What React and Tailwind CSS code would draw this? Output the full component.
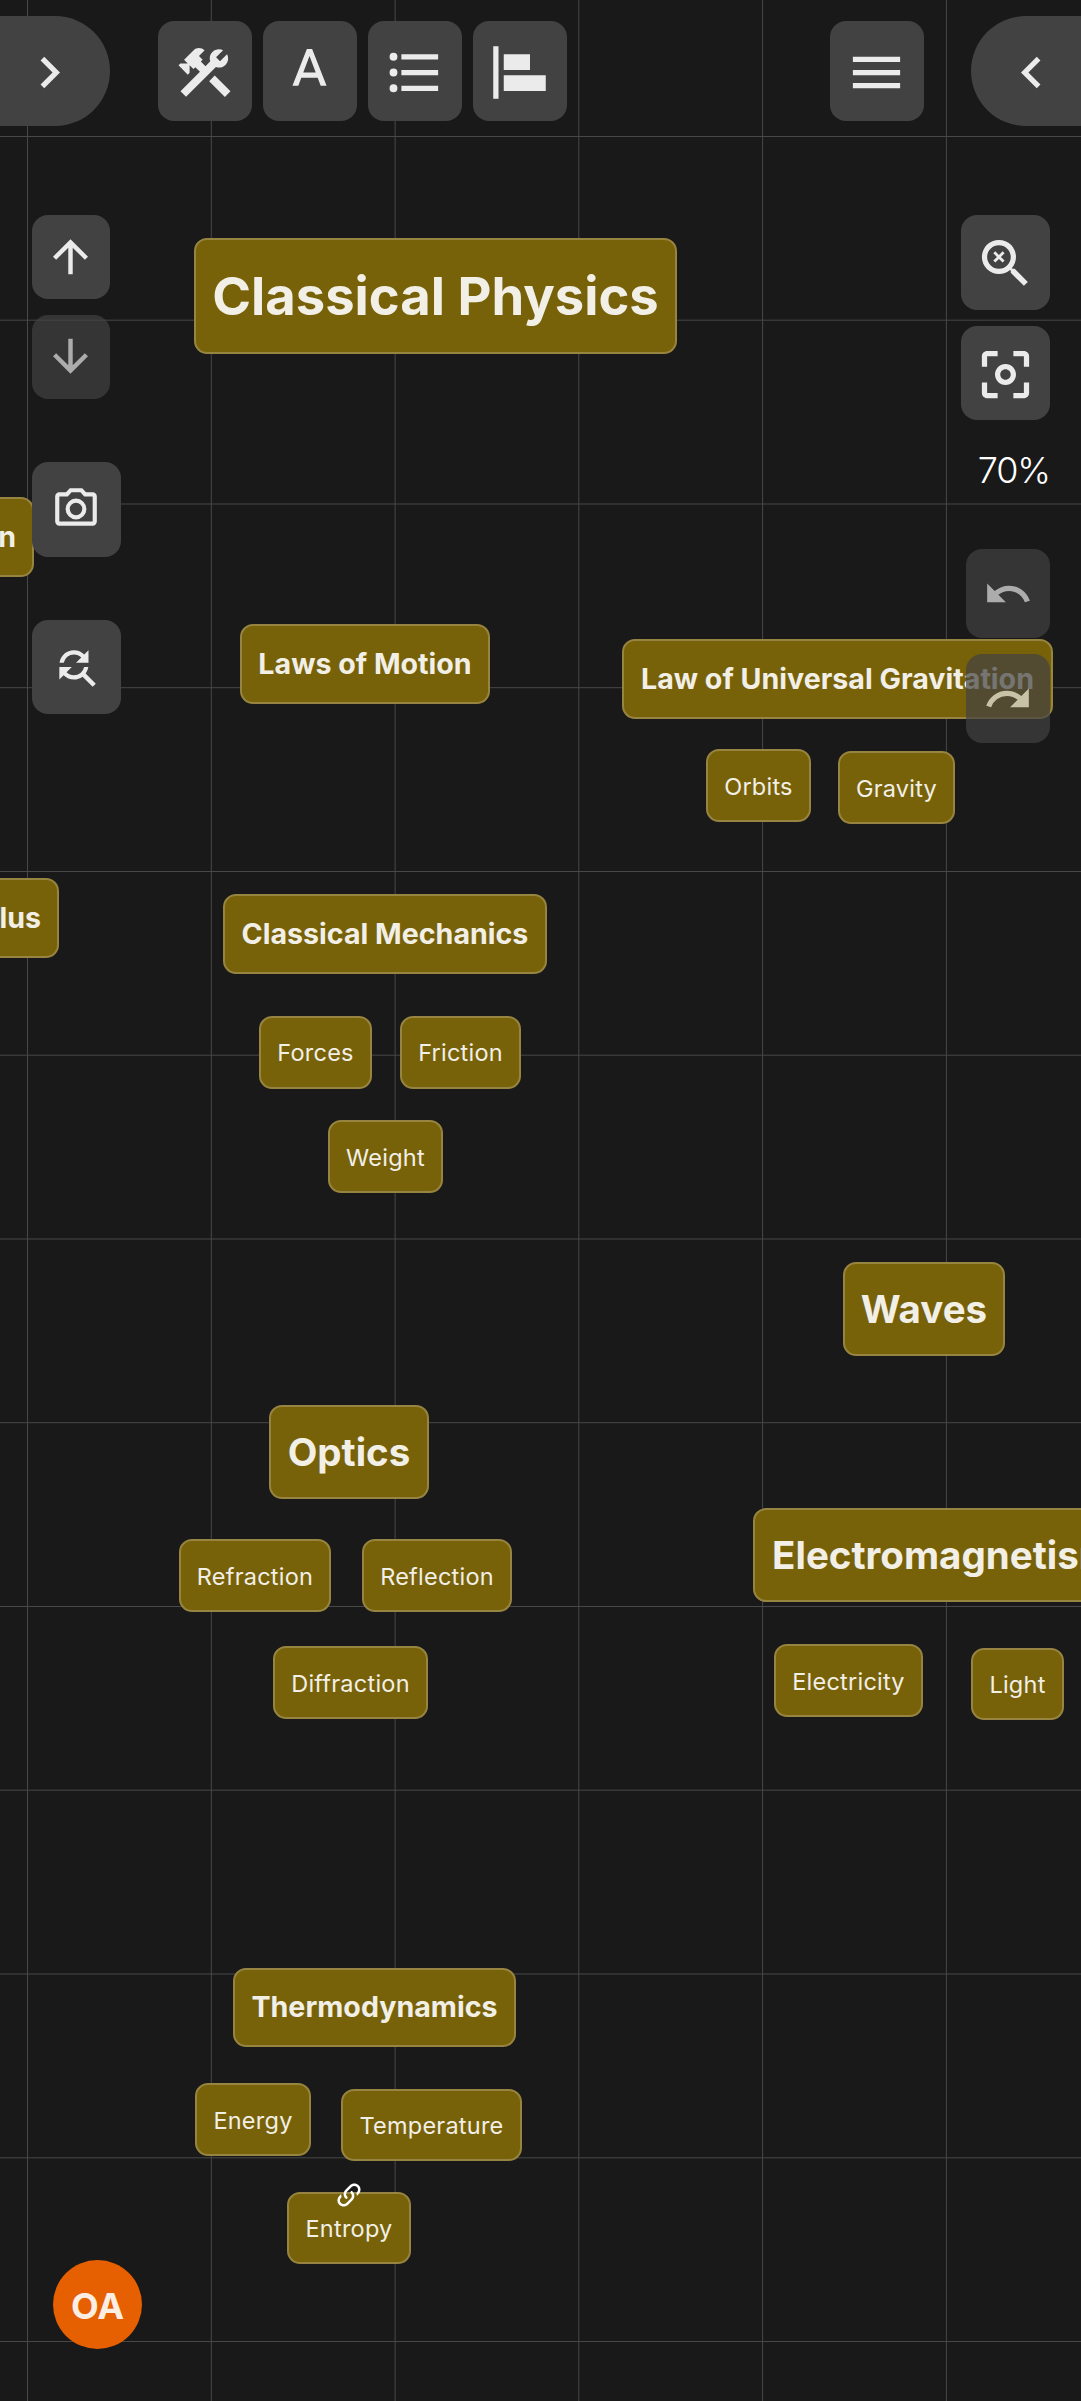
import { MdUndo, MdRedo, MdFindReplace, MdCenterFocusWeak } from "react-icons/md";

const GRID_X = [27.5, 211.3, 395.1, 578.8, 762.6, 946.4];
const GRID_Y = [136.5, 320.2, 504, 687.7, 871.5, 1055.2, 1239, 1422.7, 1606.5, 1790.2, 1974, 2157.8, 2341.5];

const SIZES = {
  title: "text-[52.5px] font-bold",
  heading: "text-[38.5px] font-bold",
  sub: "text-[28.6px] font-bold",
  small: "text-[23.5px] font-[380] tracking-[0.01em] pt-[2px]",
};

const NODES = [
  { t: "Classical Physics", s: "title", x: 194, y: 238, w: 483, h: 116 },
  { t: "Equation", s: "sub", x: -130, y: 497, w: 164, h: 80, end: true },
  { t: "Laws of Motion", s: "sub", x: 240, y: 624, w: 250, h: 80 },
  { t: "Law of Universal Gravitation", s: "sub", x: 622, y: 639, w: 431, h: 80 },
  { t: "Orbits", s: "small", x: 706, y: 749, w: 105, h: 73 },
  { t: "Gravity", s: "small", x: 838, y: 751, w: 117, h: 73 },
  { t: "Calculus", s: "sub", x: -105, y: 878, w: 164, h: 80, end: true },
  { t: "Classical Mechanics", s: "sub", x: 223, y: 894, w: 324, h: 80 },
  { t: "Forces", s: "small", x: 259, y: 1015.5, w: 113, h: 73 },
  { t: "Friction", s: "small", x: 400, y: 1015.5, w: 121, h: 73 },
  { t: "Weight", s: "small", x: 328, y: 1120, w: 115, h: 73 },
  { t: "Waves", s: "heading", x: 843, y: 1262, w: 162, h: 94 },
  { t: "Optics", s: "heading", x: 269, y: 1405, w: 160, h: 94 },
  { t: "Electromagnetism", s: "heading", x: 753, y: 1508, w: 380, h: 94 },
  { t: "Refraction", s: "small", x: 179, y: 1539, w: 152, h: 73 },
  { t: "Reflection", s: "small", x: 362, y: 1539, w: 150, h: 73 },
  { t: "Diffraction", s: "small", x: 273, y: 1646, w: 155, h: 73 },
  { t: "Electricity", s: "small", x: 774, y: 1644, w: 149, h: 73 },
  { t: "Light", s: "small", x: 971, y: 1648, w: 93, h: 72 },
  { t: "Thermodynamics", s: "sub", x: 233, y: 1968, w: 283, h: 79 },
  { t: "Energy", s: "small", x: 195, y: 2083, w: 116, h: 73 },
  { t: "Temperature", s: "small", x: 341, y: 2089, w: 181, h: 72 },
  { t: "Entropy", s: "small", x: 287, y: 2192, w: 124, h: 72, link: true },
];

const PATHS = {
  right: "M8.59 16.58L13.17 12L8.59 7.41L10 6L16 12L10 18L8.59 16.58Z",
  left: "M15.41 16.58L10.83 12L15.41 7.41L14 6L8 12L14 18L15.41 16.58Z",
  tools:
    "M13.78 15.3L19.78 21.3L21.89 19.14L15.89 13.14L13.78 15.3M17.5 10.1C17.11 10.1 16.69 10.05 16.36 9.91L4.97 21.25L2.86 19.14L10.27 11.74L8.5 9.96L7.78 10.66L6.33 9.25V12.11L5.63 12.81L2.11 9.25L2.81 8.55H5.62L4.22 7.14L7.78 3.58C8.95 2.41 10.83 2.41 12 3.58L9.89 5.74L11.3 7.14L10.59 7.85L12.38 9.63L14.2 7.75C14.06 7.42 14 7 14 6.63C14 4.66 15.56 3.11 17.5 3.11C18.09 3.11 18.61 3.25 19.08 3.53L16.41 6.2L17.91 7.7L20.58 5.03C20.86 5.5 21 6 21 6.63C21 8.55 19.45 10.1 17.5 10.1Z",
  textStyle: "M9.62 12L12 5.67L14.37 12M11 3L5.5 17H7.75L8.87 14H15.12L16.25 17H18.5L13 3H11Z",
  list: "M7 5H21V7H7V5M7 13V11H21V13H7M4 4.5A1.5 1.5 0 0 1 5.5 6A1.5 1.5 0 0 1 4 7.5A1.5 1.5 0 0 1 2.5 6A1.5 1.5 0 0 1 4 4.5M4 10.5A1.5 1.5 0 0 1 5.5 12A1.5 1.5 0 0 1 4 13.5A1.5 1.5 0 0 1 2.5 12A1.5 1.5 0 0 1 4 10.5M7 19V17H21V19H7M4 16.5A1.5 1.5 0 0 1 5.5 18A1.5 1.5 0 0 1 4 19.5A1.5 1.5 0 0 1 2.5 18A1.5 1.5 0 0 1 4 16.5Z",
  align: "M2 2H4V22H2ZM6 5H16V11H6ZM6 13H22V19H6Z",
  menu: "M3 6H21V8H3V6M3 11H21V13H3V11M3 16H21V18H3V16Z",
  up: "M13 20H11V8L5.5 13.5L4.08 12.08L12 4.16L19.92 12.08L18.5 13.5L13 8V20Z",
  down: "M11 4H13V16L18.5 10.5L19.92 11.92L12 19.84L4.08 11.92L5.5 10.5L11 16V4Z",
  camera:
    "M20 4H16.83L15 2H9L7.17 4H4A2 2 0 0 0 2 6V18A2 2 0 0 0 4 20H20A2 2 0 0 0 22 18V6A2 2 0 0 0 20 4M20 18H4V6H8.05L9.88 4H14.12L15.95 6H20V18M12 7A5 5 0 0 0 7 12A5 5 0 0 0 12 17A5 5 0 0 0 17 12A5 5 0 0 0 12 7M12 15A3 3 0 0 1 9 12A3 3 0 0 1 12 9A3 3 0 0 1 15 12A3 3 0 0 1 12 15Z",
  zoomReset:
    "M15.5 14L20.5 19L19 20.5L14 15.5V14.71L13.73 14.43C12.59 15.41 11.11 16 9.5 16A6.5 6.5 0 0 1 3 9.5A6.5 6.5 0 0 1 9.5 3A6.5 6.5 0 0 1 16 9.5C16 11.11 15.41 12.59 14.43 13.73L14.71 14H15.5M9.5 14C12 14 14 12 14 9.5C14 7 12 5 9.5 5C7 5 5 7 5 9.5C5 12 7 14 9.5 14M8.1 7.35L9.5 8.75L10.9 7.35L11.65 8.1L10.25 9.5L11.65 10.9L10.9 11.65L9.5 10.25L8.1 11.65L7.35 10.9L8.75 9.5L7.35 8.1Z",
  link: "M10.59 13.41C11 13.8 11 14.44 10.59 14.83C10.2 15.22 9.56 15.22 9.17 14.83C7.22 12.88 7.22 9.71 9.17 7.76V7.76L12.71 4.22C14.66 2.27 17.83 2.27 19.78 4.22C21.73 6.17 21.73 9.34 19.78 11.29L18.29 12.78C18.3 11.96 18.17 11.14 17.89 10.36L18.36 9.88C19.54 8.71 19.54 6.81 18.36 5.64C17.19 4.46 15.29 4.46 14.12 5.64L10.59 9.17C9.41 10.34 9.41 12.24 10.59 13.41M13.41 9.17C13.8 8.78 14.44 8.78 14.83 9.17C16.78 11.12 16.78 14.29 14.83 16.24V16.24L11.29 19.78C9.34 21.73 6.17 21.73 4.22 19.78C2.27 17.83 2.27 14.66 4.22 12.71L5.71 11.22C5.7 12.04 5.83 12.86 6.11 13.65L5.64 14.12C4.46 15.29 4.46 17.19 5.64 18.36C6.81 19.54 8.71 19.54 9.88 18.36L13.41 14.83C14.59 13.66 14.59 11.76 13.41 10.59C13 10.2 13 9.56 13.41 9.17Z",
};

function Icon({ name, className = "size-[63px]" }) {
  return (
    <svg viewBox="0 0 24 24" fill="currentColor" className={`shrink-0 ${className}`}>
      <path d={PATHS[name]} />
    </svg>
  );
}

function Btn({ className, children }) {
  return (
    <button className={`flex shrink-0 items-center justify-center bg-[#424242] text-[#ebebeb] ${className}`}>
      {children}
    </button>
  );
}

function Node({ node }) {
  return (
    <div
      className={`absolute flex items-center rounded-[13px] border-2 border-[#978440] bg-[#786209] leading-none whitespace-nowrap text-[#f2efe6] ${node.end ? "justify-end pr-4" : "justify-center"} ${SIZES[node.s]}`}
      style={{ left: node.x, top: node.y, width: node.w, height: node.h }}
    >
      {node.t}
      {node.link && <Icon name="link" className="absolute -top-[14px] left-[45px] size-[30px] text-white" />}
    </div>
  );
}

export default function App() {
  return (
    <div className="relative h-[2401px] w-[1081px] overflow-hidden bg-[#191919] font-['Inter',sans-serif]">
      <svg className="absolute inset-0 size-full" stroke="#484848" strokeWidth="1">
        {GRID_X.map((x) => <line key={x} x1={x} x2={x} y1="0" y2="2401" />)}
        {GRID_Y.map((y) => <line key={y} y1={y} y2={y} x1="0" x2="1081" />)}
      </svg>

      <div className="absolute inset-0">
        {NODES.map((n) => <Node key={n.t} node={n} />)}
      </div>

      <div className="relative flex h-full flex-col">
        <header className="flex items-center pt-4">
          <Btn className="h-[110px] w-[110px] rounded-r-full pr-[11px] pt-[2px]"><Icon name="right" /></Btn>
          <div className="ml-12 flex gap-[11px]">
            {["tools", "textStyle", "list", "align"].map((name) => (
              <Btn key={name} className="h-[100px] w-[94px] rounded-2xl pt-[3px] pr-px"><Icon name={name} /></Btn>
            ))}
          </div>
          <Btn className="ml-auto h-[100px] w-[94px] rounded-2xl pt-[3px] pr-px"><Icon name="menu" /></Btn>
          <Btn className="ml-[47px] h-[110px] w-[110px] rounded-l-full pt-[2px] pl-[11px]"><Icon name="left" /></Btn>
        </header>

        <div className="flex flex-1 justify-between pt-[89px] pr-[31px] pl-8">
          <div className="flex flex-col items-start">
            <Btn className="h-[84px] w-[78px] rounded-2xl pr-px pb-px"><Icon name="up" className="size-[53px]" /></Btn>
            <Btn className="mt-4 h-[84px] w-[78px] rounded-2xl pr-px pb-px opacity-70"><Icon name="down" className="size-[53px]" /></Btn>
            <Btn className="mt-[63px] h-[95px] w-[89px] rounded-2xl pr-px pb-px"><Icon name="camera" className="size-[50px]" /></Btn>
            <Btn className="mt-[63px] h-[94px] w-[89px] rounded-2xl pr-px"><MdFindReplace className="size-[50px]" /></Btn>
          </div>
          <div className="flex flex-col items-end">
            <Btn className="h-[95px] w-[89px] rounded-2xl pt-px pr-px"><Icon name="zoomReset" /></Btn>
            <Btn className="mt-4 h-[94px] w-[89px] rounded-2xl pt-[3px] pr-px"><MdCenterFocusWeak className="size-[63px]" /></Btn>
            <span className="mt-8 text-[36px] leading-9 font-[350] tracking-[-0.03em] text-white">70%</span>
            <Btn className="mt-[61px] h-[89px] w-[84px] rounded-2xl pt-px opacity-70"><MdUndo className="size-[50px]" /></Btn>
            <Btn className="mt-4 h-[89px] w-[84px] rounded-2xl pt-px opacity-70"><MdRedo className="size-[50px]" /></Btn>
          </div>
        </div>

        <footer className="pb-[52px] pl-[53px]">
          <div className="flex size-[89px] items-center justify-center rounded-full bg-[#e65f00] pt-[2px] text-[36px] font-bold text-[#fdeee4]">
            OA
          </div>
        </footer>
      </div>
    </div>
  );
}
